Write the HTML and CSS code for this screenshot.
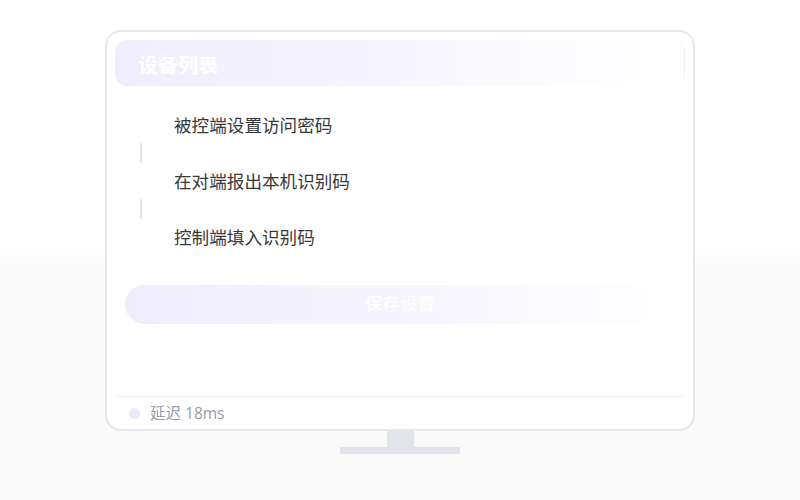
FILE: index.html
```html
<!DOCTYPE html>
<html lang="zh-CN">
<head>
<meta charset="utf-8">
<title>设备列表</title>
<link rel="stylesheet" href="styles.css">
</head>
<body>
<div class="scene">
  <div class="monitor">
    <div class="header">设备列表</div>
    <ol class="steps">
      <li class="step"><span class="marker"></span><span class="label">被控端设置访问密码</span></li>
      <li class="connector"></li>
      <li class="step"><span class="marker"></span><span class="label">在对端报出本机识别码</span></li>
      <li class="connector"></li>
      <li class="step"><span class="marker"></span><span class="label">控制端填入识别码</span></li>
    </ol>
    <button class="save">保存设置</button>
    <div class="footer"><span class="dot"></span><span class="latency">延迟 18ms</span></div>
  </div>
  <div class="neck"></div>
  <div class="base"></div>
</div>
</body>
</html>
```
FILE: styles.css
```css
html, body {
  margin: 0;
  padding: 0;
}
body {
  width: 800px;
  height: 500px;
  background: linear-gradient(to bottom, #ffffff 0%, #ffffff 49%, #fafafb 54%, #fafafb 100%);
  font-family: "Open Sans", "Noto Sans CJK SC", sans-serif;
  overflow: hidden;
}
.scene {
  display: flex;
  flex-direction: column;
  align-items: center;
  padding-top: 30px;
}
.monitor {
  box-sizing: border-box;
  width: 590px;
  height: 401px;
  border: 2px solid #e4e7eb;
  border-radius: 16px;
  background: #ffffff;
  padding: 8px 8px 6px;
  display: flex;
  flex-direction: column;
}
.header {
  box-sizing: border-box;
  height: 46px;
  border-radius: 12px;
  background: linear-gradient(to right, #f0eefd 0%, #f6f5fe 45%, #fdfdff 85%, #ffffff 100%);
  color: #ffffff;
  font-weight: 700;
  font-size: 20px;
  line-height: 46px;
  padding: 3px 0 0 23px;
  border-right: 1px solid #f3f3f6;
}
.steps {
  list-style: none;
  margin: 21px 0 0;
  padding: 0 0 0 15px;
  display: flex;
  flex-direction: column;
}
.step {
  height: 36px;
  display: flex;
  align-items: center;
  gap: 22px;
}
.marker {
  width: 22px;
  height: 22px;
  border-radius: 50%;
  background: #ffffff;
  flex: none;
}
.label {
  font-size: 17.6px;
  color: #383838;
  line-height: 22px;
}
.connector {
  width: 2px;
  height: 20px;
  margin-left: 10px;
  background: #e2e2ea;
}
.save {
  margin: 30px 10px 0;
  height: 39px;
  border: none;
  border-radius: 20px;
  background: linear-gradient(to right, #efedfd 0%, #f5f4fe 45%, #fcfcff 85%, #ffffff 100%);
  color: #ffffff;
  font-family: "Open Sans", "Noto Sans CJK SC", sans-serif;
  font-size: 17.5px;
  line-height: 36px;
  padding: 0 0 3px;
}
.footer {
  margin: auto 2px 0;
  border-top: 1px solid #eef0f4;
  padding: 6px 0 0 12px;
  display: flex;
  align-items: center;
  gap: 10px;
  height: 20px;
}
.dot {
  width: 11px;
  height: 11px;
  border-radius: 50%;
  background: #ece9fb;
}
.latency {
  font-size: 15.5px;
  color: #9a9ca8;
  line-height: 20px;
}
.neck {
  width: 27px;
  height: 16px;
  background: #e1e4e8;
}
.base {
  width: 120px;
  height: 7px;
  background: #e1e4e8;
}
```
